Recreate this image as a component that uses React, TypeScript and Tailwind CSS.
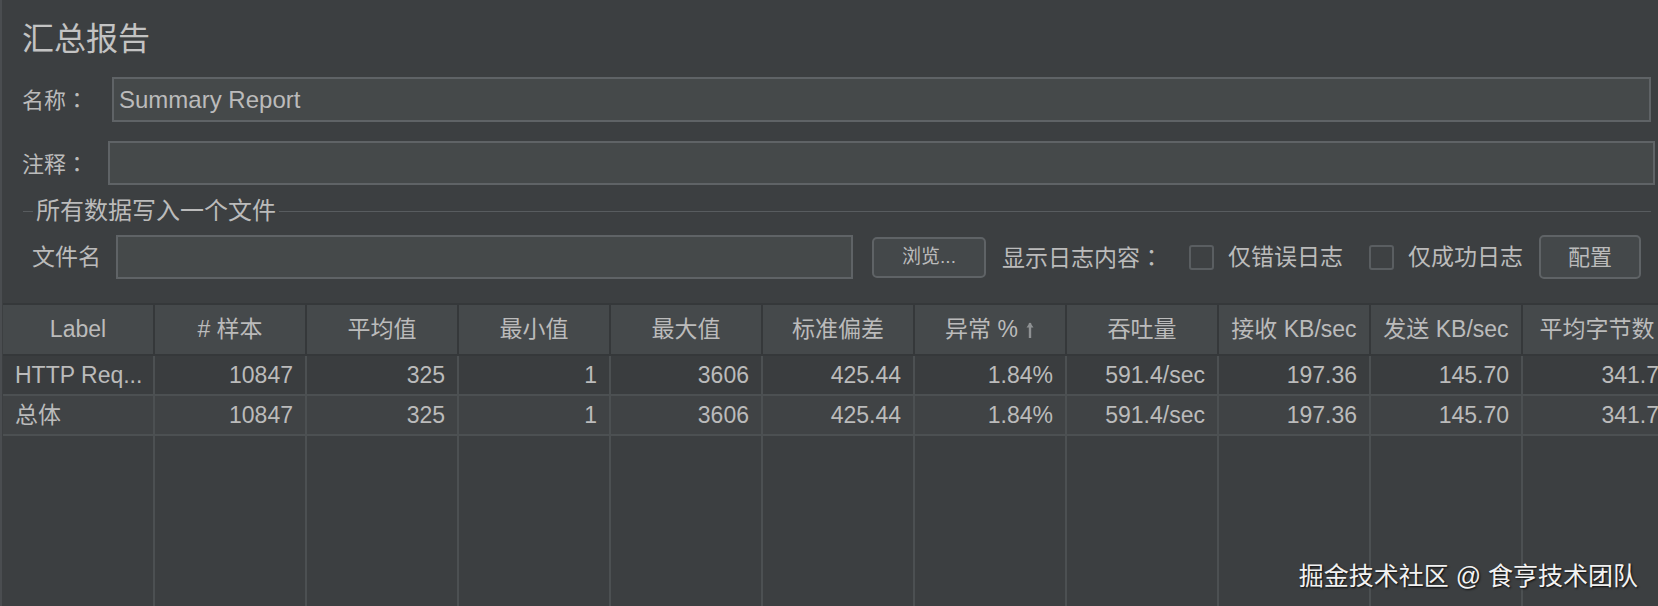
import React from 'react';

// Summary report listener panel (dark theme)

const columns = [
  'Label',
  '# 样本',
  '平均值',
  '最小值',
  '最大值',
  '标准偏差',
  '异常 %',
  '吞吐量',
  '接收 KB/sec',
  '发送 KB/sec',
  '平均字节数',
];

const rows: string[][] = [
  ['HTTP Req...', '10847', '325', '1', '3606', '425.44', '1.84%', '591.4/sec', '197.36', '145.70', '341.7'],
  ['总体', '10847', '325', '1', '3606', '425.44', '1.84%', '591.4/sec', '197.36', '145.70', '341.7'],
];

const Colon: React.FC = () => (
  <span className="[font-family:'Noto_Sans_CJK_JP',sans-serif]">：</span>
);

const SortArrow: React.FC = () => (
  <svg width="10" height="18" viewBox="0 0 10 18" className="ml-[7px] inline-block">
    <path d="M5 2 L5 17" stroke="#8e9193" strokeWidth="2.4" />
    <path d="M1.5 6.5 L5 1.5 L8.5 6.5 Z" fill="#8e9193" />
  </svg>
);

const Checkbox: React.FC = () => (
  <div className="w-[25px] h-[25px] rounded-[3px] border-2 border-[#5a5e61] bg-[#3e4143]" />
);

const TextField: React.FC<{ value?: string; className?: string }> = ({ value, className }) => (
  <div
    className={`flex items-center border-2 border-[#5f6366] bg-[#45494a] px-[5px] text-[24px] text-[#bbbbbb] ${className ?? ''}`}
  >
    {value}
  </div>
);

const gridCols = 'grid grid-cols-[repeat(10,152px)_150px]';

export default function App() {
  return (
    <div className="relative w-[1658px] h-[606px] overflow-hidden bg-[#3c3f41] border-l-2 border-[#4a4d50] text-[#bbbbbb] [font-family:'Liberation_Sans','Noto_Sans_CJK_SC',sans-serif] flex flex-col">
      {/* Title */}
      <div className="pt-[19px] pl-[20px] text-[32px] leading-[40px] text-[#c3c3c3]">汇总报告</div>

      {/* Name */}
      <div className="flex items-center mt-[18px] pl-[20px] mr-[7px] h-[45px]">
        <div className="w-[90px] text-[22px]">
          名称<Colon />
        </div>
        <TextField value="Summary Report" className="flex-1 h-full" />
      </div>

      {/* Comment */}
      <div className="flex items-center mt-[19px] pl-[20px] mr-[3px] h-[44px]">
        <div className="w-[86px] text-[22px]">
          注释<Colon />
        </div>
        <TextField className="flex-1 h-full" />
      </div>

      {/* File section */}
      <div className="flex items-center mt-[12px] h-[28px] ml-[21px] mr-[7px]">
        <div className="w-[10px] h-px bg-[#585c5f]" />
        <div className="px-[3px] text-[24px] leading-[28px]">所有数据写入一个文件</div>
        <div className="flex-1 h-px bg-[#585c5f]" />
      </div>

      <div className="flex items-center mt-[10px] h-[44px] pl-[30px] text-[23px]">
        <div className="w-[84px]">文件名</div>
        <TextField className="w-[737px] h-full" />
        <button className="ml-[19px] w-[114px] h-[41px] rounded-[5px] border-2 border-[#5f6366] bg-[#44484a] text-[19px] text-[#bbbbbb]">
          浏览...
        </button>
        <div className="ml-[16px]">
          显示日志内容<Colon />
        </div>
        <div className="ml-[26px]">
          <Checkbox />
        </div>
        <div className="ml-[14px]">仅错误日志</div>
        <div className="ml-[26px]">
          <Checkbox />
        </div>
        <div className="ml-[14px]">仅成功日志</div>
        <button className="ml-[16px] w-[102px] h-[44px] rounded-[5px] border-2 border-[#5f6366] bg-[#44484a] text-[22px] text-[#bbbbbb]">
          配置
        </button>
      </div>

      {/* Results table */}
      <div className="mt-[24px] ml-px flex-1 flex flex-col min-h-0">
        <div className={`${gridCols} h-[53px] border-t-2 border-b-2 border-[#35383a] bg-[#35383a]`}>
          {columns.map((col, i) => (
            <div
              key={col}
              className="flex items-center justify-center bg-[#45494b] mr-[2px] text-[23px] whitespace-nowrap"
            >
              {col}
              {i === 6 && <SortArrow />}
            </div>
          ))}
        </div>

        {rows.map((row, r) => (
          <div
            key={r}
            className={`${gridCols} h-[40px] border-b-2 border-[#4c5052] ${r === 0 ? 'bg-[#3a3d3f]' : 'bg-[#404345]'}`}
          >
            {row.map((cell, i) => (
              <div
                key={i}
                className={`flex items-center border-r-2 border-[#4c5052] text-[23px] whitespace-nowrap ${
                  i === 0 ? 'justify-start pl-[12px]' : 'justify-end pr-[12px]'
                }`}
              >
                {cell}
              </div>
            ))}
          </div>
        ))}

        {/* Empty area keeps the column lines */}
        <div className={`${gridCols} flex-1`}>
          {columns.map((col) => (
            <div key={col} className="border-r-2 border-[#4c5052]" />
          ))}
        </div>
      </div>

      <div className="absolute right-[20px] top-[558px] text-[25px] text-[#f2f2f2] [text-shadow:1px_1px_2px_rgba(0,0,0,0.85)]">
        掘金技术社区 @ 食亨技术团队
      </div>
    </div>
  );
}
